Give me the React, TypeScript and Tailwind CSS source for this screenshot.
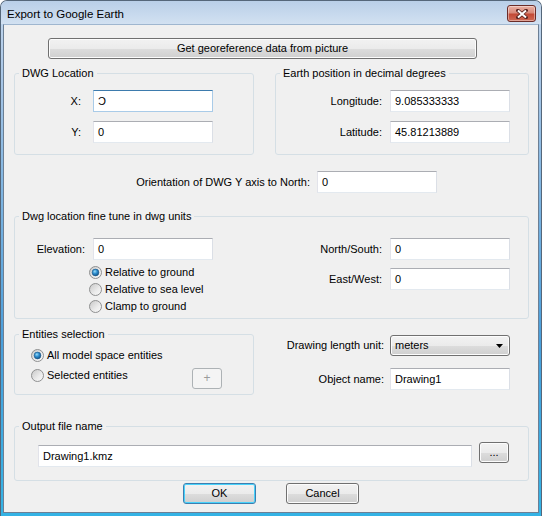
import React from 'react'

const btn =
  'rounded-[3px] border border-[#707070] bg-[linear-gradient(#f2f2f2,#ebebeb_50%,#dddddd_50%,#cfcfcf)] shadow-[inset_0_0_0_1px_#fcfcfc] flex items-center justify-center text-[11px] leading-[13px]'

function TextBox({ value, w = 'w-[120px]', focused = false, className = '' }: { value: string; w?: string; focused?: boolean; className?: string }) {
  const border = focused
    ? 'border-[#a9cbe8] border-t-[#3d7bad]'
    : 'border-l-[#e2e3ea] border-r-[#dbdfe6] border-b-[#e3e9ef] border-t-[#abadb3]'
  return (
    <div className={`h-[22px] ${w} shrink-0 bg-white border ${border} flex items-center pl-[4px] text-[11px] leading-[13px] ${className}`}>
      {value}
    </div>
  )
}

function Radio({ checked = false, id }: { checked?: boolean; id: string }) {
  return (
    <svg width="13" height="13" viewBox="0 0 13 13" className="shrink-0">
      <defs>
        <linearGradient id={`rb${id}`} x1="0" y1="0" x2="1" y2="1">
          <stop offset="0" stopColor="#c6c6c6" />
          <stop offset="0.6" stopColor="#ececec" />
          <stop offset="1" stopColor="#fafafa" />
        </linearGradient>
        <radialGradient id={`rd${id}`} cx="0.4" cy="0.35" r="0.7">
          <stop offset="0" stopColor="#9adcf8" />
          <stop offset="0.45" stopColor="#2f8fd0" />
          <stop offset="1" stopColor="#0f4c80" />
        </radialGradient>
      </defs>
      <circle cx="6.5" cy="6.5" r="6" fill={`url(#rb${id})`} stroke="#8f9091" />
      {checked && <circle cx="6.5" cy="6.5" r="3.4" fill={`url(#rd${id})`} stroke="#1d5886" strokeWidth="0.6" />}
    </svg>
  )
}

function Group({ title, className = '', children }: { title: string; className?: string; children: React.ReactNode }) {
  return (
    <fieldset className={`border border-[#d5dfe5] rounded-[3px] shrink-0 ${className}`}>
      <legend className="ml-[4px] px-[3px] text-[11px] leading-[13px]">{title}</legend>
      {children}
    </fieldset>
  )
}

export default function App() {
  return (
    <div className="w-[542px] h-[516px] font-['Liberation_Sans',Arial,sans-serif] text-[11px] leading-[13px] text-black">
      <div className="w-[542px] h-[516px] flex flex-col border border-b-0 border-[#55677a] rounded-t-[7px] overflow-hidden bg-[linear-gradient(#c6d9ee,#a8c6e6_15%,#4b9fdb_65%,#33b3e5)]">
        {/* title bar */}
        <div className="h-[23px] shrink-0 flex items-start bg-[linear-gradient(#b9cfe8,#d2e1f1)]">
          <span className="ml-[6px] mt-[6px] text-[11.5px] leading-[14px]">Export to Google Earth</span>
          <div className="ml-auto mr-[5px] mt-[4px] w-[29px] h-[17px] rounded-[3px] border border-[#6b2c28] bg-[linear-gradient(#eab0a3,#d88a7a_45%,#c34a36_55%,#cf6a55)] shadow-[inset_0_0_0_1px_rgba(255,255,255,0.4)] flex items-center justify-center">
            <svg width="12" height="10" viewBox="0 0 12 10">
              <path d="M2 1.5 L10 8.5 M10 1.5 L2 8.5" stroke="#5a2420" strokeWidth="3.6" strokeLinecap="square" />
              <path d="M2 1.5 L10 8.5 M10 1.5 L2 8.5" stroke="#ffffff" strokeWidth="2" />
            </svg>
          </div>
        </div>

        {/* body */}
        <div className="mx-[2px] mb-[3px] flex-1 bg-[#f0f0f0] border border-[#6c7f94] border-t-[#9fb6cf] flex flex-col">
          <button className={`${btn} ml-[44px] mt-[13px] w-[429px] h-[21px]`}>Get georeference data from picture</button>

          <div className="flex mt-[8px] ml-[10px]">
            <Group title="DWG Location" className="w-[240px] pt-[10px] pb-[11px]">
              <div className="flex items-center">
                <span className="w-[66px] text-right">X:</span>
                <TextBox value="Ɔ" focused className="ml-[12px]" />
              </div>
              <div className="flex items-center mt-[9px]">
                <span className="w-[66px] text-right">Y:</span>
                <TextBox value="0" className="ml-[12px]" />
              </div>
            </Group>
            <Group title="Earth position in decimal degrees" className="ml-[21px] w-[254px] pt-[10px] pb-[11px]">
              <div className="flex items-center">
                <span className="w-[106px] text-right">Longitude:</span>
                <TextBox value="9.085333333" className="ml-[8px]" />
              </div>
              <div className="flex items-center mt-[9px]">
                <span className="w-[106px] text-right">Latitude:</span>
                <TextBox value="45.81213889" className="ml-[8px]" />
              </div>
            </Group>
          </div>

          <div className="flex items-center mt-[16px]">
            <span className="w-[306px] text-right">Orientation of DWG Y axis to North:</span>
            <TextBox value="0" className="ml-[7px]" />
          </div>

          <Group title="Dwg location fine tune in dwg units" className="ml-[10px] mt-[17px] w-[515px] pt-[15px] pb-[3px]">
            <div className="flex items-start pr-[18px]">
              <div className="flex flex-col">
                <div className="flex items-center">
                  <span className="w-[70px] text-right">Elevation:</span>
                  <TextBox value="0" className="ml-[8px]" />
                </div>
                <div className="ml-[74px] mt-[4px] flex flex-col">
                  {['Relative to ground', 'Relative to sea level', 'Clamp to ground'].map((t, i) => (
                    <div key={t} className="h-[17px] flex items-center">
                      <Radio id={`el${i}`} checked={i === 0} />
                      <span className="ml-[3px]">{t}</span>
                    </div>
                  ))}
                </div>
              </div>
              <div className="ml-auto flex flex-col">
                <div className="flex items-center">
                  <span className="w-[100px] text-right">North/South:</span>
                  <TextBox value="0" className="ml-[8px]" />
                </div>
                <div className="flex items-center mt-[8px]">
                  <span className="w-[100px] text-right">East/West:</span>
                  <TextBox value="0" className="ml-[8px]" />
                </div>
              </div>
            </div>
          </Group>

          <div className="flex items-start mt-[9px] ml-[10px]">
            <Group title="Entities selection" className="w-[240px] pt-[4px] pb-[5px]">
              <div className="pl-[16px]">
                <div className="h-[20px] flex items-center">
                  <Radio id="en0" checked />
                  <span className="ml-[3px]">All model space entities</span>
                </div>
                <div className="flex items-start">
                  <div className="w-[161px] h-[20px] flex items-center">
                    <Radio id="en1" />
                    <span className="ml-[3px]">Selected entities</span>
                  </div>
                  <div className="mt-[3px] w-[30px] h-[21px] rounded-[3px] border border-[#adb2b5] bg-[#f4f4f4] flex items-center justify-center text-[12px] text-[#9b9b9b]">+</div>
                </div>
              </div>
            </Group>
            <div className="ml-[30px] mt-[7px] flex flex-col">
              <div className="flex items-center">
                <span className="w-[100px] text-right">Drawing length unit:</span>
                <div className={`${btn} ml-[6px] w-[120px] h-[21px] !justify-start pl-[4px] pr-[6px]`}>
                  <span>meters</span>
                  <svg width="7" height="4" viewBox="0 0 7 4" className="ml-auto">
                    <path d="M0 0 H7 L3.5 4 Z" fill="#000" />
                  </svg>
                </div>
              </div>
              <div className="flex items-center mt-[12px]">
                <span className="w-[100px] text-right">Object name:</span>
                <TextBox value="Drawing1" className="ml-[6px]" />
              </div>
            </div>
          </div>

          <Group title="Output file name" className="ml-[10px] mt-[25px] w-[515px] pt-[9px] pb-[13px]">
            <div className="flex items-start pl-[23px]">
              <TextBox value="Drawing1.kmz" w="w-[434px]" className="mt-[3px]" />
              <button className={`${btn} ml-[7px] w-[30px] h-[21px]`}>...</button>
            </div>
          </Group>

          <div className="flex justify-center gap-[30px] mt-[2px]">
            <button className={`${btn} w-[73px] h-[21px] !border-[#3c7fb1] !shadow-[inset_0_0_0_1px_#48d2fb]`}>OK</button>
            <button className={`${btn} w-[73px] h-[21px]`}>Cancel</button>
          </div>
        </div>
      </div>
    </div>
  )
}
